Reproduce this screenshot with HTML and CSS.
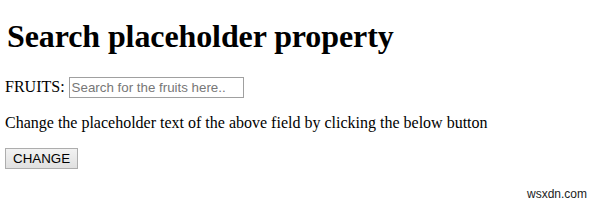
FILE: index.html
```html
<!DOCTYPE html>
<html lang="en">
<head>
    <meta charset="UTF-8">
    <title>Search placeholder property</title>
    <link rel="stylesheet" href="styles.css">
</head>
<body>
    <h1>Search placeholder property</h1>
    <label for="fruits">FRUITS:</label>
    <input type="search" id="fruits" class="search-field" placeholder="Search for the fruits here..">
    <p>Change the placeholder text of the above field by clicking the below button</p>
    <button class="change-btn" onclick="changePlaceholder()">CHANGE</button>
    <div class="watermark">wsxdn.com</div>

    <script>
        function changePlaceholder() {
            document.getElementById('fruits').placeholder = 'Search for the vegetables here..';
        }
    </script>
</body>
</html>
```

FILE: styles.css
```css
body {
    font-family: 'Liberation Serif', 'Times New Roman', serif;
    font-size: 16px;
    color: #000;
    background: #fff;
    margin: 8px 8px 8px 5px;
}

h1 {
    font-size: 32px;
    font-weight: bold;
    letter-spacing: -0.1px;
    margin: 10px 0 22px 2px;
}

.search-field {
    -webkit-appearance: none;
    appearance: none;
    font-family: 'Liberation Sans', Arial, sans-serif;
    font-size: 13.33px;
    width: 169px;
    height: 19px;
    padding: 0 2px;
    border: 1px solid #a0a0a0;
    border-radius: 0;
    box-sizing: content-box;
    vertical-align: baseline;
}

.search-field::placeholder {
    color: #777;
}

.change-btn {
    font-family: 'Liberation Sans', Arial, sans-serif;
    font-size: 13.33px;
    color: #000;
    background: linear-gradient(to bottom, #f2f2f2, #e0e0e0);
    border: 1px solid #adadad;
    border-radius: 0;
    padding: 2px 7px;
    margin: 0;
    height: 21px;
    width: 73px;
}

.watermark {
    position: absolute;
    left: 527px;
    top: 187px;
    font-family: 'Liberation Sans', Arial, sans-serif;
    font-size: 12px;
    color: #222;
}
```
